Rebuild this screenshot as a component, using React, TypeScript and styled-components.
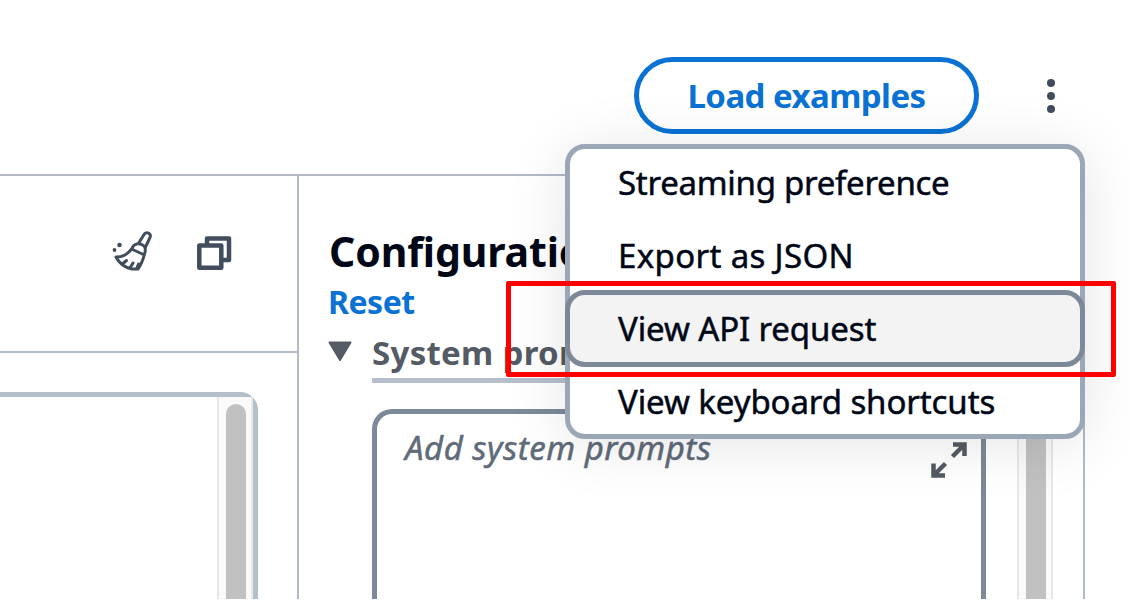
import React from "react";
import styled, { createGlobalStyle } from "styled-components";

const Global = createGlobalStyle`
  * { box-sizing: border-box; }
  body { margin: 0; background: #fff; font-family: "Noto Sans", "Open Sans", sans-serif; color: #000716; }
`;

const Page = styled.div`
  position: relative;
  width: 1130px;
  height: 599px;
  overflow: hidden;
  display: flex;
  flex-direction: column;
`;

const Label = styled.span<{ $spacing?: number; $medium?: boolean }>`
  white-space: nowrap;
  letter-spacing: ${(p) => p.$spacing ?? 0}px;
  -webkit-text-stroke: ${(p) => (p.$medium ? "0.5px currentColor" : "0")};
`;

const Header = styled.header`
  height: 174px;
  flex: none;
  display: flex;
  justify-content: flex-end;
  align-items: flex-start;
  padding: 57px 73px 0 0;
  gap: 64px;
`;

const LoadButton = styled.button`
  width: 345px;
  height: 77px;
  padding: 1px 0 0;
  border: 5px solid #0972d3;
  border-radius: 39px;
  background: #fff;
  color: #0972d3;
  font: 700 33px/40px "Noto Sans", sans-serif;
`;

const MoreButton = styled.div`
  width: 14px;
  margin: 22px 0 0;
`;

const Dots = styled.svg`
  display: block;
`;

const Columns = styled.main`
  flex: 1;
  display: flex;
  width: 1085px;
  border-top: 2px solid #b0bac8;
  border-right: 2px solid #b0bac8;
`;

const Conversation = styled.section`
  width: 299px;
  flex: none;
  border-right: 2px solid #b0bac8;
  display: flex;
  flex-direction: column;
`;

const Tools = styled.div`
  height: 177px;
  flex: none;
  padding: 54px 0 0 110px;
  display: flex;
  align-items: flex-start;
  gap: 40px;
  border-bottom: 2px solid #b0bac8;
`;

const Copy = styled.svg`
  margin-top: 5px;
`;

const Output = styled.div`
  flex: 1;
  width: 258px;
  margin-top: 39px;
  border: 5px solid #b4bfcb;
  border-left: 0;
  border-bottom: 0;
  border-radius: 0 18px 0 0;
  display: flex;
  justify-content: flex-end;
`;

const Track = styled.div<{ $top: number }>`
  width: 36px;
  background: #fafafa;
  border: solid #e8e8e8;
  border-width: 0 2px;
  padding: ${(p) => p.$top}px 0 0 7px;
  display: flex;
`;

const Thumb = styled.div`
  width: 20px;
  border-radius: 10px 10px 0 0;
  background: #c1c1c1;
`;

const Configuration = styled.section`
  flex: 1;
  padding: 47px 0 0 30px;
  display: flex;
  flex-direction: column;
`;

const Title = styled.h2`
  margin: 0;
  font-size: 41px;
  line-height: 56px;
  font-weight: 700;
`;

const Reset = styled.div`
  margin-left: -1px;
  color: #0972d3;
  font-size: 32px;
  line-height: 45px;
  font-weight: 700;
`;

const SystemRow = styled.div`
  display: flex;
  color: #545b64;
  font-size: 33px;
  font-weight: 700;
  line-height: 58px;
`;

const Caret = styled.svg`
  margin: 17px 20px 0 -1px;
  flex: none;
`;

const Underlined = styled.div`
  height: 59px;
  width: 614px;
  border-bottom: 5px solid #b4bfcb;
`;

const Body = styled.div`
  flex: 1;
  display: flex;
  padding: 26px 30px 0 43px;
  justify-content: space-between;
`;

const Prompt = styled.div`
  width: 614px;
  padding: 11px 13px 0 28px;
  border: 5px solid #7d8998;
  border-bottom: 0;
  border-radius: 20px 20px 0 0;
  display: flex;
  justify-content: space-between;
  color: #5f6b7a;
  font-size: 33px;
  line-height: 46px;
  font-style: italic;
`;

const Expand = styled.svg`
  margin-top: 16px;
`;

const Menu = styled.div`
  position: absolute;
  left: 565px;
  top: 144px;
  width: 520px;
  height: 295px;
  border: 5px solid #9ba7b6;
  border-radius: 20px;
  background: #fff;
  box-shadow: 0 6px 60px rgba(0, 7, 22, 0.11);
`;

const Item = styled.div<{ $active?: boolean }>`
  height: 77px;
  margin: 0 -5px -4px;
  padding: 0 0 0 48px;
  border: 5px solid ${(p) => (p.$active ? "#7d8998" : "transparent")};
  border-radius: 20px;
  background: ${(p) => (p.$active ? "#f3f3f3" : "transparent")};
  font-size: 33px;
  line-height: 67px;
  &:first-child { margin-top: -5px; }
`;

const Highlight = styled.div`
  position: absolute;
  left: 506px;
  top: 281px;
  width: 610px;
  height: 96px;
  border: 5px solid #f00;
  border-radius: 2px;
`;

const Broom = () => (
  <svg width="46" height="42" viewBox="110 230 46 42" fill="none" stroke="#414d5c" strokeWidth="3" strokeLinejoin="round" strokeLinecap="round">
    <path d="M138.500 243.500l5.500-9c2-3.500 8-1 6 3l-4.500 9.500" />
    <path d="M132 248.500c1.500-5 8-6.500 12-2.500 2 2 1.500 5 .5 8-1.500 6-3.500 11-6.500 15h-6c-7-1.500-13-6-16-12 8 0 12-3 16-8.500z" />
    <path d="M132.500 249.500l11 5M123 263.500l3.500-3M130.500 267l2.500-4M137 268l1.500-4" />
    <g fill="#414d5c" stroke="none"><circle cx="119.500" cy="245" r="2.300" /><circle cx="114.500" cy="250" r="1.900" /></g>
  </svg>
);

const CopyIcon = () => (
  <Copy width="36" height="36" viewBox="196 235 36 36" fill="none" stroke="#414d5c" strokeWidth="4.500" strokeLinejoin="round">
    <path d="M199.300 245.500h22v22.300h-22zM207 245v-6.500h22V260h-7" />
  </Copy>
);

const items: [string, number][] = [
  ["Streaming preference", -0.28],
  ["Export as JSON", 0.35],
  ["View API request", -0.12],
  ["View keyboard shortcuts", -0.1],
];

export default function App() {
  return (
    <Page>
      <Global />
      <Header>
        <LoadButton><Label $spacing={-0.55}>Load examples</Label></LoadButton>
        <MoreButton>
          <Dots width="14" height="36" fill="#414d5c">
            <circle cx="8" cy="4" r="4" /><circle cx="8" cy="17" r="4" /><circle cx="8" cy="30" r="4" />
          </Dots>
        </MoreButton>
      </Header>
      <Columns>
        <Conversation>
          <Tools><Broom /><CopyIcon /></Tools>
          <Output><Track $top={7}><Thumb /></Track></Output>
        </Conversation>
        <Configuration>
          <Title><Label $spacing={-0.15}>Configurations</Label></Title>
          <Reset><Label $spacing={-0.5}>Reset</Label></Reset>
          <SystemRow>
            <Caret width="24" height="21" viewBox="0 0 24 21"><path d="M1.500 1.500h21L12 19z" fill="#545b64" stroke="#545b64" strokeWidth="2" strokeLinejoin="round" /></Caret>
            <Underlined><Label $spacing={0.3}>System prompts</Label></Underlined>
          </SystemRow>
          <Body>
            <Prompt>
              <Label $spacing={0.5} $medium>Add system prompts</Label>
              <Expand width="38" height="38" viewBox="929 441 38 38" fill="none" stroke="#545b64" strokeWidth="4.500">
                <path d="M952 444.500h11.500v11.500M963.500 444.500l-12 12M932.500 463.500v12h11.500M932.500 475.500l12-12" />
              </Expand>
            </Prompt>
            <Track $top={0}><Thumb /></Track>
          </Body>
        </Configuration>
      </Columns>
      <Menu>
        {items.map(([text, spacing], i) => (
          <Item key={text} $active={i === 2}><Label $spacing={spacing} $medium>{text}</Label></Item>
        ))}
      </Menu>
      <Highlight />
    </Page>
  );
}
